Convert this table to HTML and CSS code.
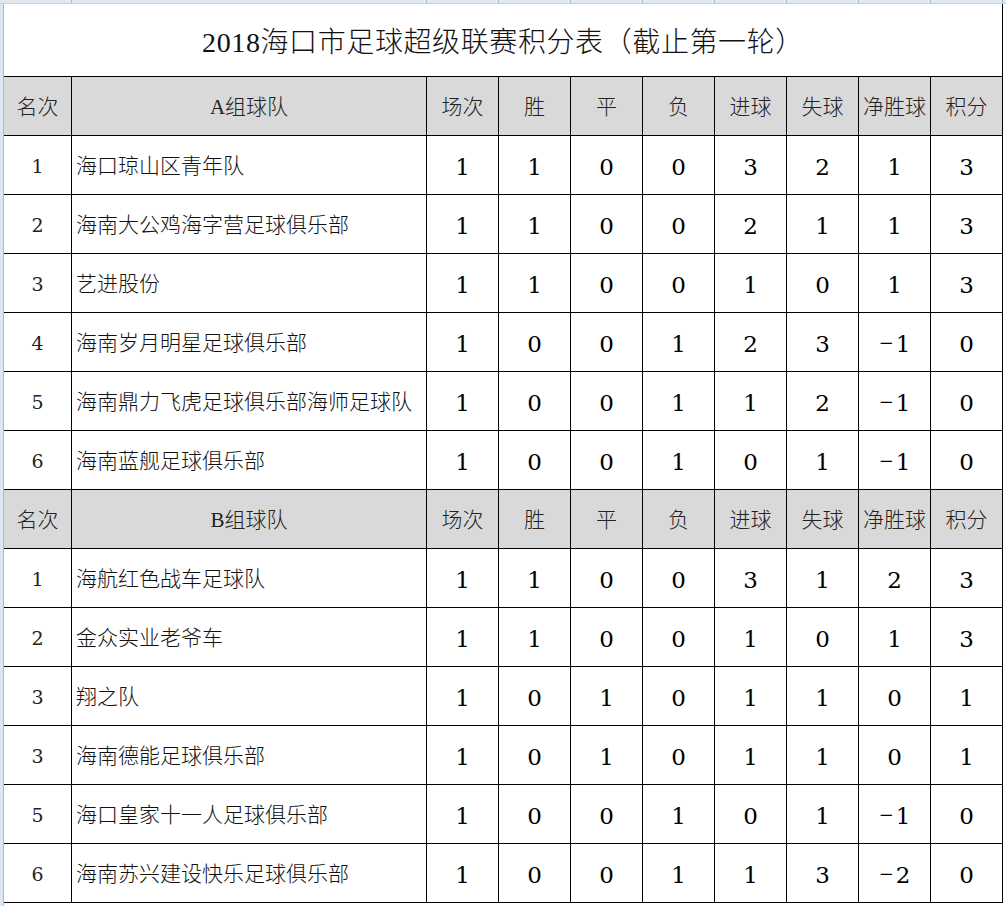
FILE: index.html
```html
<!DOCTYPE html>
<html lang="zh-CN">
<head>
<meta charset="utf-8">
<title>2018海口市足球超级联赛积分表</title>
<link rel="stylesheet" href="styles.css">
</head>
<body>
<div class="sheet">
  <div class="colhdr">
    <span class="ch c1"></span><span class="ch c2"></span><span class="ch"></span><span class="ch"></span><span class="ch"></span><span class="ch"></span><span class="ch"></span><span class="ch"></span><span class="ch"></span><span class="ch"></span>
  </div>
  <div class="main">
    <div class="rowhdr"></div>
    <div class="grid">
      <div class="title">2018海口市足球超级联赛积分表（截止第一轮）</div>

      <div class="head">名次</div><div class="head">A组球队</div><div class="head">场次</div><div class="head">胜</div><div class="head">平</div><div class="head">负</div><div class="head">进球</div><div class="head">失球</div><div class="head">净胜球</div><div class="head">积分</div>

      <div class="rank">1</div><div class="team">海口琼山区青年队</div><div class="num">1</div><div class="num">1</div><div class="num">0</div><div class="num">0</div><div class="num">3</div><div class="num">2</div><div class="num">1</div><div class="num">3</div>
      <div class="rank">2</div><div class="team">海南大公鸡海字营足球俱乐部</div><div class="num">1</div><div class="num">1</div><div class="num">0</div><div class="num">0</div><div class="num">2</div><div class="num">1</div><div class="num">1</div><div class="num">3</div>
      <div class="rank">3</div><div class="team">艺进股份</div><div class="num">1</div><div class="num">1</div><div class="num">0</div><div class="num">0</div><div class="num">1</div><div class="num">0</div><div class="num">1</div><div class="num">3</div>
      <div class="rank">4</div><div class="team">海南岁月明星足球俱乐部</div><div class="num">1</div><div class="num">0</div><div class="num">0</div><div class="num">1</div><div class="num">2</div><div class="num">3</div><div class="num"><span class="minus">−</span>1</div><div class="num">0</div>
      <div class="rank">5</div><div class="team">海南鼎力飞虎足球俱乐部海师足球队</div><div class="num">1</div><div class="num">0</div><div class="num">0</div><div class="num">1</div><div class="num">1</div><div class="num">2</div><div class="num"><span class="minus">−</span>1</div><div class="num">0</div>
      <div class="rank">6</div><div class="team">海南蓝舰足球俱乐部</div><div class="num">1</div><div class="num">0</div><div class="num">0</div><div class="num">1</div><div class="num">0</div><div class="num">1</div><div class="num"><span class="minus">−</span>1</div><div class="num">0</div>

      <div class="head">名次</div><div class="head">B组球队</div><div class="head">场次</div><div class="head">胜</div><div class="head">平</div><div class="head">负</div><div class="head">进球</div><div class="head">失球</div><div class="head">净胜球</div><div class="head">积分</div>

      <div class="rank">1</div><div class="team">海航红色战车足球队</div><div class="num">1</div><div class="num">1</div><div class="num">0</div><div class="num">0</div><div class="num">3</div><div class="num">1</div><div class="num">2</div><div class="num">3</div>
      <div class="rank">2</div><div class="team">金众实业老爷车</div><div class="num">1</div><div class="num">1</div><div class="num">0</div><div class="num">0</div><div class="num">1</div><div class="num">0</div><div class="num">1</div><div class="num">3</div>
      <div class="rank">3</div><div class="team">翔之队</div><div class="num">1</div><div class="num">0</div><div class="num">1</div><div class="num">0</div><div class="num">1</div><div class="num">1</div><div class="num">0</div><div class="num">1</div>
      <div class="rank">3</div><div class="team">海南德能足球俱乐部</div><div class="num">1</div><div class="num">0</div><div class="num">1</div><div class="num">0</div><div class="num">1</div><div class="num">1</div><div class="num">0</div><div class="num">1</div>
      <div class="rank">5</div><div class="team">海口皇家十一人足球俱乐部</div><div class="num">1</div><div class="num">0</div><div class="num">0</div><div class="num">1</div><div class="num">0</div><div class="num">1</div><div class="num"><span class="minus">−</span>1</div><div class="num">0</div>
      <div class="rank">6</div><div class="team">海南苏兴建设快乐足球俱乐部</div><div class="num">1</div><div class="num">0</div><div class="num">0</div><div class="num">1</div><div class="num">1</div><div class="num">3</div><div class="num"><span class="minus">−</span>2</div><div class="num">0</div>
    </div>
  </div>
</div>
</body>
</html>
```
FILE: styles.css
```css
html, body {
  margin: 0;
  padding: 0;
  background: #ffffff;
}
body {
  width: 1006px;
  height: 906px;
  overflow: hidden;
  font-family: "Liberation Serif", "Noto Sans CJK SC", serif;
  color: #111;
}
.sheet {
  display: flex;
  flex-direction: column;
}
.colhdr {
  height: 4px;
  box-sizing: border-box;
  display: flex;
  padding-left: 4px;
  background: #e3e9f1;
  border-bottom: 1px solid #c5d1df;
}
.ch {
  width: 72px;
  flex: none;
  box-sizing: border-box;
  border-right: 1px solid #a7b8cc;
}
.ch.c1 { width: 68px; }
.ch.c2 { width: 355px; }
.main {
  display: flex;
}
.rowhdr {
  width: 4px;
  flex: none;
  box-sizing: border-box;
  background: #dce6f3;
  border-right: 1px solid #a9bcd4;
  height: 902px;
}
.grid {
  display: grid;
  grid-template-columns: 67px 354px repeat(8, 71px);
  grid-template-rows: 72px repeat(14, 58px);
  gap: 1px;
  background: #000;
  border-right: 1px solid #000;
  border-bottom: 1px solid #000;
  align-self: flex-start;
}
.grid > div {
  background: #fff;
  display: flex;
  align-items: center;
  justify-content: center;
  white-space: nowrap;
  overflow: hidden;
  line-height: 1;
}
.grid > .title {
  grid-column: 1 / -1;
  padding-top: 5px;
  font-size: 28px;
  font-weight: 300;
  letter-spacing: 0.6px;
  color: #111;
}
.grid > .head {
  background: #d9d9d9;
  padding-top: 2px;
  font-size: 21px;
  font-weight: 300;
  color: #222;
}
.grid > .rank {
  padding-top: 3px;
  font-family: "DejaVu Serif", serif;
  font-size: 19px;
  color: #222;
}
.grid > .team {
  justify-content: flex-start;
  padding-left: 4px;
  padding-top: 3px;
  font-size: 21px;
  font-weight: 300;
  color: #111;
}
.grid > .num {
  padding-top: 4px;
  font-family: "DejaVu Serif", serif;
  font-size: 23px;
  color: #000;
}
.minus {
  font-size: 18px;
  margin-right: 2px;
  margin-bottom: 2px;
}
```
